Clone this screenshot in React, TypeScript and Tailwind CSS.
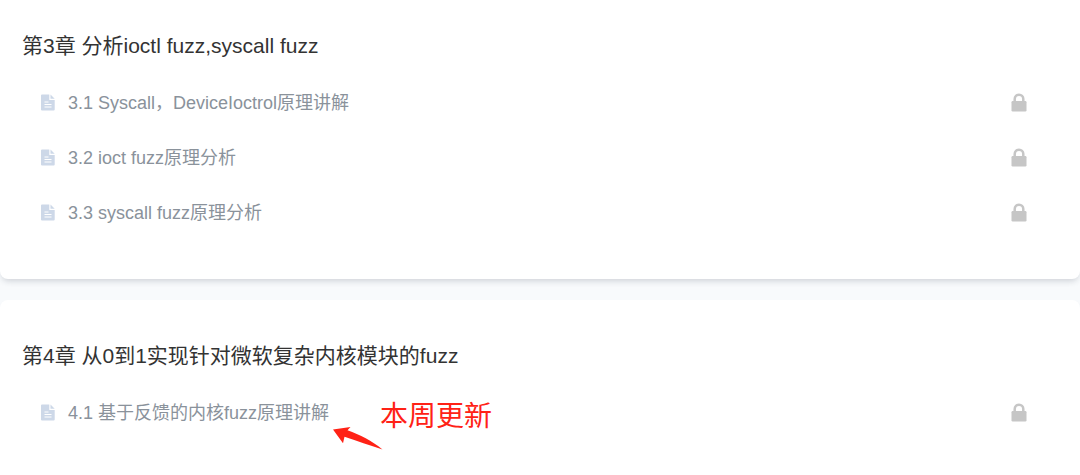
interface Lesson {
  title: string;
  note?: string;
}

interface Chapter {
  title: string;
  lessons: Lesson[];
}

const chapters: Chapter[] = [
  {
    title: '第3章 分析ioctl fuzz,syscall fuzz',
    lessons: [
      { title: '3.1 Syscall，DeviceIoctrol原理讲解' },
      { title: '3.2 ioct fuzz原理分析' },
      { title: '3.3 syscall fuzz原理分析' },
    ],
  },
  {
    title: '第4章 从0到1实现针对微软复杂内核模块的fuzz',
    lessons: [{ title: '4.1 基于反馈的内核fuzz原理讲解', note: '本周更新' }],
  },
];

export default function App() {
  return (
    <main
      lang="zh-CN"
      className="flex min-h-screen flex-col gap-[21px] bg-[#f8fafc] font-['Liberation_Sans','Noto_Sans_CJK_SC',sans-serif]"
    >
      {chapters.map((chapter) => (
        <ChapterCard key={chapter.title} chapter={chapter} />
      ))}
    </main>
  );
}

function ChapterCard({ chapter }: { chapter: Chapter }) {
  return (
    <section className="rounded-lg bg-white px-[22px] pt-[41px] pb-[39px] shadow-[0_4px_6px_-2px_rgba(40,50,70,0.2)] first:rounded-t-none first:pt-[31px] last:grow last:rounded-b-none last:pb-8">
      <h2 className="mb-[14px] text-[21px] leading-[30px] text-[#333333]">{chapter.title}</h2>
      <ul>
        {chapter.lessons.map((lesson) => (
          <LessonRow key={lesson.title} lesson={lesson} />
        ))}
      </ul>
    </section>
  );
}

function LessonRow({ lesson }: { lesson: Lesson }) {
  return (
    <li className="flex h-[55px] items-center pr-[31px] pl-[18px]">
      <FileIcon />
      <div className="relative ml-3 text-[18px] leading-7 text-[#8a929b]">
        {lesson.title}
        {lesson.note && <UpdateNote text={lesson.note} />}
      </div>
      <LockIcon />
    </li>
  );
}

// hand-drawn style callout sitting next to a lesson title
function UpdateNote({ text }: { text: string }) {
  return (
    <div className="absolute top-0 left-full whitespace-nowrap text-[#ff2216]">
      <span className="ml-[51px] block text-[28px] leading-9">{text}</span>
      <svg className="absolute top-7 left-1" width="50" height="24" viewBox="0 0 50 24" fill="currentColor" aria-hidden="true">
        <path d="M0 2.500 17.500 0 14.500 3.300C27 7.800 39 14 49.500 22.500 36 18 25 14.500 11.500 9.800L10 16.300Z" />
      </svg>
    </div>
  );
}

function FileIcon() {
  return (
    <svg className="shrink-0" width="16" height="18" viewBox="0 0 16 18" aria-hidden="true">
      <path fill="#cdd8e8" d="M2 .5h7.300v5.500h5.400V15.500a1 1 0 0 1-1 1H2a1 1 0 0 1-1-1v-14a1 1 0 0 1 1-1Z" />
      <path fill="#cdd8e8" d="M10.500 .5v4.300h4.200Z" />
      <path stroke="#ffffff" strokeWidth="1" d="M4.500 8h4M4.500 10.500h7M4.500 13h7" />
    </svg>
  );
}

function LockIcon() {
  return (
    <svg className="ml-auto shrink-0" width="16" height="20" viewBox="0 0 16 20" role="img" aria-label="未解锁">
      <path fill="none" stroke="#c6c6c6" strokeWidth="2.500" d="M3.700 9V6a4.300 4.300 0 0 1 8.600 0V9" />
      <rect x="0.500" y="8" width="15" height="10.500" rx="1.200" fill="#c6c6c6" />
    </svg>
  );
}
